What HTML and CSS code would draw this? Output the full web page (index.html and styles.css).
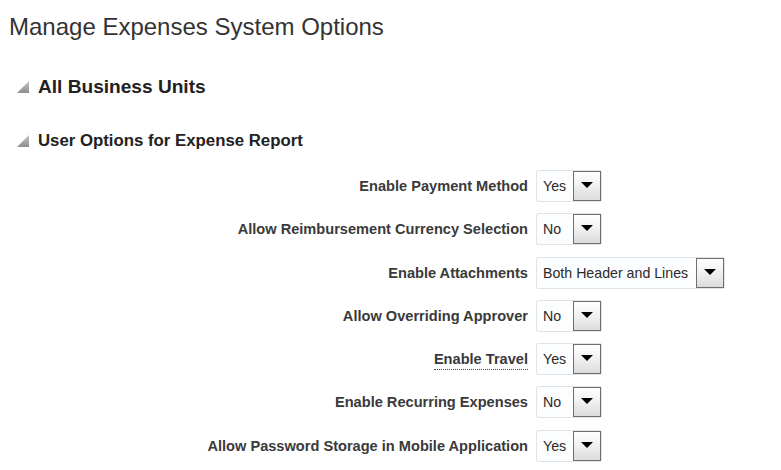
FILE: index.html
```html
<!DOCTYPE html>
<html>
<head>
<meta charset="utf-8">
<link rel="stylesheet" href="styles.css">
</head>
<body>
<div class="page">
  <h1 class="title">Manage Expenses System Options</h1>
  <div class="section-head big">
    <span class="tri"></span><span>All Business Units</span>
  </div>
  <div class="section-head">
    <span class="tri"></span><span>User Options for Expense Report</span>
  </div>
  <div class="form">
    <div class="label">Enable Payment Method</div>
    <div class="select"><span class="val">Yes</span><span class="btn"><span class="arrow"></span></span></div>
    <div class="label">Allow Reimbursement Currency Selection</div>
    <div class="select"><span class="val">No</span><span class="btn"><span class="arrow"></span></span></div>
    <div class="label">Enable Attachments</div>
    <div class="select wide"><span class="val">Both Header and Lines</span><span class="btn"><span class="arrow"></span></span></div>
    <div class="label">Allow Overriding Approver</div>
    <div class="select"><span class="val">No</span><span class="btn"><span class="arrow"></span></span></div>
    <div class="label"><span class="dotted">Enable Travel</span></div>
    <div class="select"><span class="val">Yes</span><span class="btn"><span class="arrow"></span></span></div>
    <div class="label">Enable Recurring Expenses</div>
    <div class="select"><span class="val">No</span><span class="btn"><span class="arrow"></span></span></div>
    <div class="label">Allow Password Storage in Mobile Application</div>
    <div class="select"><span class="val">Yes</span><span class="btn"><span class="arrow"></span></span></div>
  </div>
</div>
</body>
</html>
```
FILE: styles.css
```css
html, body {
  margin: 0;
  padding: 0;
  background: #fff;
}
.page {
  font-family: "Liberation Sans", Arial, sans-serif;
  color: #333;
  padding: 12px 0 0 9px;
}
.title {
  margin: 0;
  font-size: 24px;
  font-weight: normal;
  line-height: 30px;
  color: #333;
}
.section-head {
  display: flex;
  align-items: center;
  gap: 9px;
  margin-left: 8px;
  font-weight: bold;
  font-size: 16.8px;
  color: #222;
  height: 22px;
}
.section-head.big {
  font-size: 19.1px;
  margin-top: 34px;
}
.section-head + .section-head {
  margin-top: 32px;
}
.tri {
  width: 12px;
  height: 12px;
  clip-path: polygon(100% 0, 100% 100%, 0 100%);
  background: linear-gradient(to bottom, #c4c4c4, #8e8e8e);
}
.form {
  display: grid;
  grid-template-columns: 519px auto;
  column-gap: 8px;
  row-gap: 11.3px;
  margin-top: 18px;
  align-items: center;
  justify-items: start;
}
.label {
  justify-self: end;
  font-weight: bold;
  font-size: 14.6px;
  color: #3a3a3a;
}
.dotted {
  border-bottom: 1px dotted #444;
  padding-bottom: 2px;
}
.select {
  display: flex;
  align-items: center;
  justify-content: space-between;
  box-sizing: border-box;
  width: 66px;
  height: 32px;
  border: 1px solid #dfe4e8;
  border-radius: 2px;
  background: #fcfdfe;
  padding: 0 0 0 6px;
  font-size: 14.2px;
  color: #2a2a2a;
}
.select.wide {
  width: 189px;
}
.btn {
  box-sizing: border-box;
  width: 28px;
  height: 30px;
  border: 1px solid #6f6f6f;
  background: linear-gradient(to bottom, #ffffff 0%, #f2f2f2 45%, #dcdcdc 100%);
  display: flex;
  align-items: center;
  justify-content: center;
}
.arrow {
  width: 0;
  height: 0;
  border-left: 6px solid transparent;
  border-right: 6px solid transparent;
  border-top: 6px solid #000;
  margin-bottom: 2px;
}
```
